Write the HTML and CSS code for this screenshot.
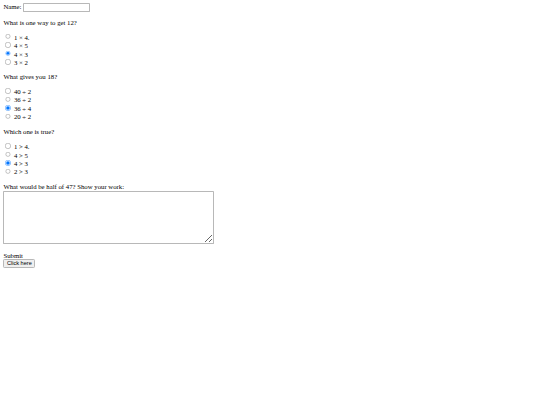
FILE: index.html
```html
<!DOCTYPE html>
<html>
<head>
<meta charset="utf-8">
<title>Quiz</title>
<link rel="stylesheet" href="styles.css">
</head>
<body>
<div class="page">
<form class="quiz">
  <div class="name-row">Name: <input type="text" class="name-input"></div>
  <p class="question">What is one way to get 12?</p>
  <div class="options">
    <label class="option"><input type="radio" name="q1"> 1 × 4.</label>
    <label class="option"><input type="radio" name="q1"> 4 × 5</label>
    <label class="option"><input type="radio" name="q1" checked> 4 × 3</label>
    <label class="option"><input type="radio" name="q1"> 3 × 2</label>
  </div>
  <p class="question">What gives you 18?</p>
  <div class="options">
    <label class="option"><input type="radio" name="q2"> 40 ÷ 2</label>
    <label class="option"><input type="radio" name="q2"> 36 ÷ 2</label>
    <label class="option"><input type="radio" name="q2" checked> 36 ÷ 4</label>
    <label class="option"><input type="radio" name="q2"> 20 ÷ 2</label>
  </div>
  <p class="question q-last">Which one is true?</p>
  <div class="options">
    <label class="option"><input type="radio" name="q3"> 1 &gt; 4.</label>
    <label class="option"><input type="radio" name="q3"> 4 &gt; 5</label>
    <label class="option"><input type="radio" name="q3" checked> 4 &gt; 3</label>
    <label class="option"><input type="radio" name="q3"> 2 &gt; 3</label>
  </div>
  <p class="question work-q">What would be half of 47? Show your work:<br><textarea class="work"></textarea></p>
  <p class="question">Submit<br><button type="button" class="submit">Click here</button></p>
</form>
</div>
</body>
</html>
```

FILE: styles.css
```css
html, body {
  margin: 0;
  padding: 0;
  background: #ffffff;
}
.page {
  zoom: 0.421875;
  padding: 8px;
  font-family: "Liberation Serif", "Times New Roman", serif;
  font-size: 16px;
  color: #000;
}
.quiz {
  margin: 0;
}
.name-input {
  font-family: "Liberation Sans", Arial, sans-serif;
  width: 159px;
  height: 21px;
  box-sizing: border-box;
  border: 1px solid #b8b8b8;
  border-radius: 2px;
}
.question {
  margin: 16px 0;
}
.q-last {
  margin-top: 18px;
}
.options {
  display: block;
}
.option {
  display: block;
  height: 20px;
  line-height: 20px;
}
.work-q {
  margin-top: 18px;
}
.work {
  width: 500px;
  height: 125px;
  margin-top: 2px;
  box-sizing: border-box;
  vertical-align: baseline;
  border: 1px solid #b8b8b8;
  border-radius: 2px;
}
.submit {
  font-family: "Liberation Sans", Arial, sans-serif;
  border: 1px solid #b8b8b8;
  border-radius: 3px;
  background: #efefef;
  padding: 1px 6px;
}
```
